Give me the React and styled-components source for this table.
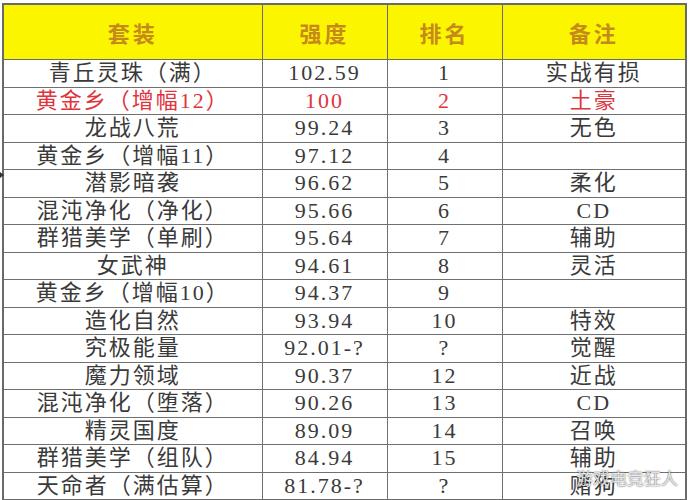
import React from "react";
import styled, { createGlobalStyle } from "styled-components";

const GlobalStyle = createGlobalStyle`
  html, body {
    margin: 0;
    padding: 0;
    background: #ffffff;
  }
  body {
    width: 692px;
    height: 500px;
    overflow: hidden;
  }
`;

const Page = styled.div`
  position: relative;
  width: 692px;
  height: 500px;
  padding: 3px 0 0 2px;
  box-sizing: border-box;
  background: #fff;
`;

const Table = styled.table`
  border-collapse: collapse;
  table-layout: fixed;
  width: 683px;
  font-family: "Liberation Serif", "Noto Sans CJK SC", serif;
  color: #3a3a3a;
  border: 2px solid #6a6a6a;
`;

const HeadCell = styled.th`
  height: 54px;
  padding: 0;
  background: #fcf500;
  color: #c58a1c;
  font-size: 22px;
  font-weight: bold;
  letter-spacing: 3px;
  text-align: center;
  border: 1.5px solid #6a6a6a;
`;

const Cell = styled.td`
  height: 26.5px;
  padding: 0;
  font-size: 22px;
  line-height: 26px;
  letter-spacing: 2px;
  text-align: center;
  white-space: nowrap;
  color: ${({ $hot }) => ($hot ? "#e0343c" : "#3a3a3a")};
  border: 1.5px solid #707070;
`;

const Watermark = styled.div`
  position: absolute;
  left: 576px;
  top: 465px;
  font-family: "Noto Sans CJK SC", sans-serif;
  font-size: 17px;
  color: rgba(255, 255, 255, 0.85);
  text-shadow: 0 0 2px rgba(0, 0, 0, 0.45), 0 0 1px rgba(0, 0, 0, 0.5);
`;

const EdgeMark = styled.div`
  position: absolute;
  left: 0;
  top: 172px;
  width: 4px;
  height: 6px;
  background: #2b3b2b;
  clip-path: polygon(0 0, 100% 50%, 0 100%);
`;

const columns = ["套装", "强度", "排名", "备注"];

const rows = [
  ["青丘灵珠（满）", "102.59", "1", "实战有损"],
  ["黄金乡（增幅12）", "100", "2", "土豪", true],
  ["龙战八荒", "99.24", "3", "无色"],
  ["黄金乡（增幅11）", "97.12", "4", ""],
  ["潜影暗袭", "96.62", "5", "柔化"],
  ["混沌净化（净化）", "95.66", "6", "CD"],
  ["群猎美学（单刷）", "95.64", "7", "辅助"],
  ["女武神", "94.61", "8", "灵活"],
  ["黄金乡（增幅10）", "94.37", "9", ""],
  ["造化自然", "93.94", "10", "特效"],
  ["究极能量", "92.01-?", "?", "觉醒"],
  ["魔力领域", "90.37", "12", "近战"],
  ["混沌净化（堕落）", "90.26", "13", "CD"],
  ["精灵国度", "89.09", "14", "召唤"],
  ["群猎美学（组队）", "84.94", "15", "辅助"],
  ["天命者（满估算）", "81.78-?", "?", "赌狗"],
];

const widths = [259, 125, 115, 184];

export default function App() {
  return (
    <Page>
      <GlobalStyle />
      <Table>
        <colgroup>
          {widths.map((w, i) => (
            <col key={i} style={{ width: w }} />
          ))}
        </colgroup>
        <thead>
          <tr>
            {columns.map((c) => (
              <HeadCell key={c}>{c}</HeadCell>
            ))}
          </tr>
        </thead>
        <tbody>
          {rows.map(([name, power, rank, note, hot]) => (
            <tr key={name}>
              <Cell $hot={hot}>{name}</Cell>
              <Cell $hot={hot}>{power}</Cell>
              <Cell $hot={hot}>{rank}</Cell>
              <Cell $hot={hot}>{note}</Cell>
            </tr>
          ))}
        </tbody>
      </Table>
      <EdgeMark />
      <Watermark>游戏电竞狂人</Watermark>
    </Page>
  );
}
